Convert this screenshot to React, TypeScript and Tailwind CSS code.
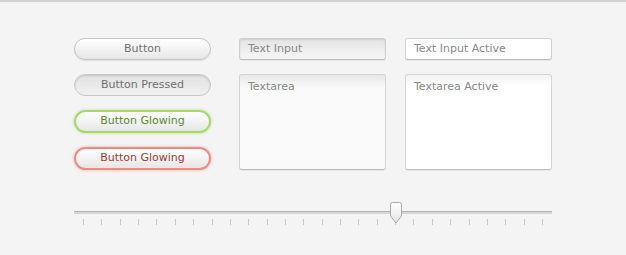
const font = "font-['Lucida_Grande','DejaVu_Sans',sans-serif] text-[11px]";

const btnBase =
  "flex w-[137px] items-center justify-center rounded-full border bg-gradient-to-b " +
  font;

const ticks = Array.from({ length: 26 }, (_, i) => i);

export default function App() {
  return (
    <div className="h-[255px] w-[626px] overflow-hidden border-t-2 border-[#d0d0d0] bg-[#f4f4f4]">
      <div className="flex pl-[74px] pt-[36px]">
        <div className="flex w-[137px] flex-col gap-[14px]">
          <div
            className={`${btnBase} h-[22px] border-[#c4c4c4] from-white to-[#e6e6e6] text-[#707070] shadow-[0_1px_1px_rgba(0,0,0,0.08)]`}
          >
            Button
          </div>
          <div
            className={`${btnBase} h-[22px] border-[#c8c8c8] from-[#e2e2e2] to-[#f0f0f0] text-[#707070] shadow-[inset_0_1px_2px_rgba(0,0,0,0.12)]`}
          >
            Button Pressed
          </div>
          <div
            className={`${btnBase} h-[23px] border-2 border-[#a8d86a] from-white to-[#e6e6e6] text-[#5b8a2a] shadow-[0_0_3px_rgba(140,210,70,0.6)]`}
          >
            Button Glowing
          </div>
          <div
            className={`${btnBase} h-[23px] border-2 border-[#ee8a84] from-white to-[#e6e6e6] text-[#9e3b36] shadow-[0_0_3px_rgba(240,110,100,0.6)]`}
          >
            Button Glowing
          </div>
        </div>

        <div className="ml-[28px] flex w-[147px] flex-col gap-[14px]">
          <div
            className={`flex h-[22px] items-center rounded-[3px] border border-[#cfcfcf] border-b-[#bdbdbd] bg-gradient-to-b from-[#e4e4e4] to-[#f6f6f6] px-[8px] text-[#888] shadow-[inset_0_1px_2px_rgba(0,0,0,0.1),0_1px_0_rgba(0,0,0,0.06)] ${font}`}
          >
            Text Input
          </div>
          <div
            className={`h-[96px] rounded-[3px] border border-[#d4d4d4] border-b-[#bdbdbd] bg-gradient-to-b from-[#e8e8e8] via-[#fafafa] via-[14%] to-[#fafafa] px-[8px] pt-[4px] text-[#888] shadow-[0_1px_0_rgba(0,0,0,0.06)] ${font}`}
          >
            Textarea
          </div>
        </div>

        <div className="ml-[19px] flex w-[147px] flex-col gap-[14px]">
          <div
            className={`flex h-[22px] items-center rounded-[3px] border border-[#d2d2d2] border-b-[#bdbdbd] bg-white px-[8px] text-[#888] shadow-[0_1px_0_rgba(0,0,0,0.06)] ${font}`}
          >
            Text Input Active
          </div>
          <div
            className={`h-[96px] rounded-[3px] border border-[#d4d4d4] border-b-[#bdbdbd] bg-gradient-to-b from-[#f2f2f2] via-white via-[12%] to-white px-[8px] pt-[4px] text-[#888] shadow-[0_1px_0_rgba(0,0,0,0.06)] ${font}`}
          >
            Textarea Active
          </div>
        </div>
      </div>

      <div className="relative ml-[74px] mt-[41px] w-[478px]">
        <div className="h-[3px] border-t border-[#b4b4b4] bg-[#d6d6d6]" />
        <div className="mt-[5px] flex justify-between px-[9px]">
          {ticks.map((i) => (
            <div key={i} className="h-[6px] w-px bg-[#c8c8c8]" />
          ))}
        </div>
        <svg
          className="absolute left-[315px] top-[-9px]"
          width="14"
          height="22"
          viewBox="0 0 14 22"
        >
          <defs>
            <linearGradient id="th" x1="0" y1="0" x2="0" y2="1">
              <stop offset="0" stopColor="#ffffff" />
              <stop offset="1" stopColor="#e4e4e4" />
            </linearGradient>
          </defs>
          <path
            d="M1.5 2.5 Q1.5 0.5 3.5 0.5 L10.5 0.5 Q12.5 0.5 12.5 2.5 L12.5 14 L7 21 L1.5 14 Z"
            fill="url(#th)"
            stroke="#a8a8a8"
          />
        </svg>
      </div>
    </div>
  );
}
